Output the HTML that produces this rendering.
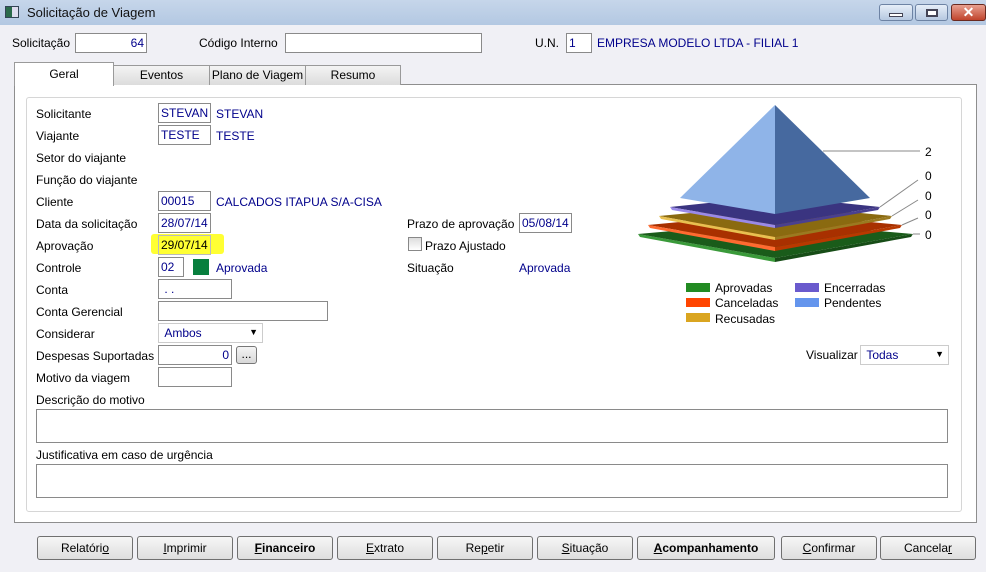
<!DOCTYPE html>
<html><head><meta charset="utf-8"><style>
*{box-sizing:border-box}
body{margin:0;width:986px;height:572px;overflow:hidden;background:#f0f0f5;font-family:"Liberation Sans",sans-serif;font-size:12px;color:#000;position:relative}
.a{position:absolute;white-space:nowrap}
.in{position:absolute;background:#fff;border:1px solid #8a8a8a;color:#00008b;padding:2px 2px;line-height:14px;height:20px}
.bl{color:#00008b}
.tab{position:absolute;top:65px;height:20px;background:linear-gradient(#f4f4f4,#dcdcdc);border:1px solid #9a9a9a;border-bottom:none;text-align:center;line-height:19px}
.btn{position:absolute;top:536px;height:24px;width:96px;border:1px solid #707070;border-radius:3px;background:linear-gradient(#f6f6f6,#dedede);text-align:center;line-height:22px;font-size:12px}
</style></head><body>
<div class="a" style="left:0;top:0;width:986px;height:25px;background:linear-gradient(#c6d6ea,#b3c8e2)"></div>
<div class="a" style="left:5px;top:6px;width:14px;height:12px;border:1px solid #345;background:linear-gradient(90deg,#2a6a4a 50%,#dde 50%)"></div>
<div class="a" style="left:27px;top:5px;font-size:13px;color:#111">Solicitação de Viagem</div>
<div class="a" style="left:879px;top:4px;width:34px;height:17px;border:1px solid #6d83a4;border-radius:3px;background:linear-gradient(#e6eef8,#b6c8e0)"><div style="margin:8px auto;width:14px;height:4px;background:#fff;border:1px solid #445"></div></div>
<div class="a" style="left:915px;top:4px;width:33px;height:17px;border:1px solid #6d83a4;border-radius:3px;background:linear-gradient(#e6eef8,#b6c8e0)"><div style="margin:4px auto;width:12px;height:8px;background:#fff;border:2px solid #445"></div></div>
<div class="a" style="left:951px;top:4px;width:35px;height:17px;border:1px solid #6a2a20;border-radius:3px;background:linear-gradient(#e8a090,#c0442c);color:#fff;font-weight:bold;text-align:center;line-height:15px;font-size:14px">✕</div>

<div class="a" style="left:12px;top:36px">Solicitação</div>
<div class="in" style="left:75px;top:33px;width:72px;text-align:right">64</div>
<div class="a" style="left:199px;top:36px">Código Interno</div>
<div class="in" style="left:285px;top:33px;width:197px"></div>
<div class="a" style="left:535px;top:36px">U.N.</div>
<div class="in" style="left:566px;top:33px;width:26px">1</div>
<div class="a bl" style="left:597px;top:36px">EMPRESA MODELO LTDA - FILIAL 1</div>

<div class="a" style="left:14px;top:84px;width:963px;height:439px;background:#fff;border:1px solid #8e8e8e"></div>
<div class="tab" style="left:113px;width:97px">Eventos</div>
<div class="tab" style="left:209px;width:97px">Plano de Viagem</div>
<div class="tab" style="left:305px;width:96px">Resumo</div>
<div class="tab" style="left:14px;top:62px;height:24px;width:100px;background:#fff;line-height:22px">Geral</div>
<div class="a" style="left:26px;top:97px;width:936px;height:415px;border:1px solid #d6d6d6;border-radius:3px"></div>

<div class="a" style="left:36px;top:107px">Solicitante</div>
<div class="in" style="left:158px;top:103px;width:53px">STEVAN</div><div class="a bl" style="left:216px;top:107px">STEVAN</div>
<div class="a" style="left:36px;top:129px">Viajante</div>
<div class="in" style="left:158px;top:125px;width:53px">TESTE</div><div class="a bl" style="left:216px;top:129px">TESTE</div>
<div class="a" style="left:36px;top:151px">Setor do viajante</div>
<div class="a" style="left:36px;top:173px">Função do viajante</div>
<div class="a" style="left:36px;top:195px">Cliente</div>
<div class="in" style="left:158px;top:191px;width:53px">00015</div><div class="a bl" style="left:216px;top:195px">CALCADOS ITAPUA S/A-CISA</div>
<div class="a" style="left:36px;top:217px">Data da solicitação</div>
<div class="in" style="left:158px;top:213px;width:53px">28/07/14</div>
<div class="a" style="left:407px;top:217px">Prazo de aprovação</div>
<div class="in" style="left:519px;top:213px;width:53px">05/08/14</div>
<div class="a" style="left:36px;top:239px">Aprovação</div>
<div class="a" style="left:151px;top:234px;width:73px;height:20px;background:#ffff33;border-radius:3px"></div>
<div class="in" style="left:158px;top:235px;width:53px;background:#ffff33;color:#000;border-color:#bbb">29/07/14</div>
<div class="a" style="left:408px;top:237px;width:14px;height:14px;border:1px solid #888;background:linear-gradient(#ddd,#fff)"></div>
<div class="a" style="left:425px;top:239px">Prazo Ajustado</div>
<div class="a" style="left:36px;top:261px">Controle</div>
<div class="in" style="left:158px;top:257px;width:26px">02</div>
<div class="a" style="left:193px;top:259px;width:16px;height:16px;background:#087f3e"></div>
<div class="a bl" style="left:216px;top:261px">Aprovada</div>
<div class="a" style="left:407px;top:261px">Situação</div>
<div class="a bl" style="left:519px;top:261px">Aprovada</div>
<div class="a" style="left:36px;top:283px">Conta</div>
<div class="in" style="left:158px;top:279px;width:74px">&nbsp;. .</div>
<div class="a" style="left:36px;top:305px">Conta Gerencial</div>
<div class="in" style="left:158px;top:301px;width:170px"></div>
<div class="a" style="left:36px;top:327px">Considerar</div>
<div class="in" style="left:158px;top:323px;width:105px;border-color:#ccc">&nbsp;Ambos<span style="position:absolute;right:4px;top:1px;font-size:9px;color:#000">▼</span></div>
<div class="a" style="left:36px;top:349px">Despesas Suportadas</div>
<div class="in" style="left:158px;top:345px;width:74px;text-align:right">0</div>
<div class="a" style="left:236px;top:346px;width:21px;height:18px;border:1px solid #777;border-radius:3px;background:linear-gradient(#f4f4f4,#d8d8d8);text-align:center;line-height:14px">...</div>
<div class="a" style="left:36px;top:371px">Motivo da viagem</div>
<div class="in" style="left:158px;top:367px;width:74px"></div>
<div class="a" style="left:36px;top:393px">Descrição do motivo</div>
<div class="in" style="left:36px;top:409px;width:912px;height:34px"></div>
<div class="a" style="left:36px;top:448px">Justificativa em caso de urgência</div>
<div class="in" style="left:36px;top:464px;width:912px;height:34px"></div>

<svg class="a" style="left:0;top:0" width="986" height="300">
<!-- green -->
<polygon points="638,234 775,258 775,262 640,237" fill="#3a9a3a"/>
<polygon points="775,258 913,234 911,237 775,262" fill="#174d17"/>
<polygon points="638,234 775,222 913,234 775,258" fill="#1a5c1a"/>
<!-- orange -->
<polygon points="648,225 775,213 902,225 775,247" fill="#a83000"/>
<polygon points="648,225 775,247 775,251 650,228" fill="#ff6a30"/>
<polygon points="775,247 902,225 900,228 775,251" fill="#b83800"/>
<!-- gold -->
<polygon points="659,216 775,205 892,216 775,237" fill="#8a6a10"/>
<polygon points="659,216 775,237 775,240 661,219" fill="#e8c050"/>
<polygon points="775,237 892,216 890,219 775,240" fill="#9a7a20"/>
<!-- purple -->
<polygon points="670,207 775,196 880,207 775,225" fill="#3a3480"/>
<polygon points="670,207 775,225 775,228 672,210" fill="#9a8ae8"/>
<polygon points="775,225 880,207 878,210 775,228" fill="#4a4090"/>
<!-- blue -->
<polygon points="775,105 680,198 775,214" fill="#8fb4e8"/>
<polygon points="775,105 870,198 775,214" fill="#46699f"/>
<g stroke="#888" fill="none">
<path d="M823,151H920"/><path d="M880,207L918,180"/><path d="M892,216L918,200"/><path d="M902,225L918,218"/><path d="M913,234H920"/>
</g>
<g font-size="12" font-family="Liberation Sans"><text x="925" y="156">2</text><text x="925" y="180">0</text><text x="925" y="200">0</text><text x="925" y="219">0</text><text x="925" y="239">0</text></g>
</svg>
<div class="a" style="left:686px;top:283px;width:24px;height:9px;background:#228b22"></div><div class="a" style="left:715px;top:281px">Aprovadas</div>
<div class="a" style="left:686px;top:298px;width:24px;height:9px;background:#ff4500"></div><div class="a" style="left:715px;top:296px">Canceladas</div>
<div class="a" style="left:686px;top:313px;width:24px;height:9px;background:#daa520"></div><div class="a" style="left:715px;top:312px">Recusadas</div>
<div class="a" style="left:795px;top:283px;width:24px;height:9px;background:#6a5acd"></div><div class="a" style="left:824px;top:281px">Encerradas</div>
<div class="a" style="left:795px;top:298px;width:24px;height:9px;background:#6495ed"></div><div class="a" style="left:824px;top:296px">Pendentes</div>
<div class="a" style="left:806px;top:348px">Visualizar</div>
<div class="in" style="left:860px;top:345px;width:89px;border-color:#ccc">&nbsp;Todas<span style="position:absolute;right:4px;top:1px;font-size:9px;color:#000">▼</span></div>

<div class="btn" style="left:37px">Relatóri<u>o</u></div>
<div class="btn" style="left:137px"><u>I</u>mprimir</div>
<div class="btn" style="left:237px;font-weight:bold"><u>F</u>inanceiro</div>
<div class="btn" style="left:337px"><u>E</u>xtrato</div>
<div class="btn" style="left:437px">Re<u>p</u>etir</div>
<div class="btn" style="left:537px"><u>S</u>ituação</div>
<div class="btn" style="left:637px;width:138px;font-weight:bold"><u>A</u>companhamento</div>
<div class="btn" style="left:781px"><u>C</u>onfirmar</div>
<div class="btn" style="left:880px">Cancela<u>r</u></div>
</body></html>
